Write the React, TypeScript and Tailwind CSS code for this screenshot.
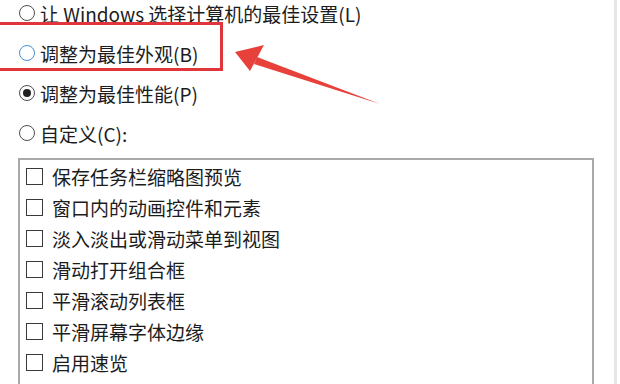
import React from 'react'

const radios = [
  { label: '让 Windows 选择计算机的最佳设置(L)', state: 'off' },
  { label: '调整为最佳外观(B)', state: 'hover' },
  { label: '调整为最佳性能(P)', state: 'on' },
  { label: '自定义(C):', state: 'off' },
]

const options = [
  '保存任务栏缩略图预览',
  '窗口内的动画控件和元素',
  '淡入淡出或滑动菜单到视图',
  '滑动打开组合框',
  '平滑滚动列表框',
  '平滑屏幕字体边缘',
  '启用速览',
  '在鼠标指针下显示阴影',
]

function Radio({ state }: { state: string }) {
  const ring = state === 'hover' ? 'border-[#4a90d0]' : 'border-[#4d4d4d]'
  return (
    <span className={`flex h-4 w-4 shrink-0 items-center justify-center rounded-full border-[1.5px] bg-white ${ring}`}>
      {state === 'on' && <span className="h-2 w-2 rounded-full bg-[#222]" />}
    </span>
  )
}

export default function App() {
  return (
    <div
      className="relative flex h-[384px] w-[620px] overflow-hidden bg-white text-[19px] text-[#1c1c1c]"
      style={{ fontFamily: '"Noto Sans CJK SC", "Noto Sans", sans-serif' }}
    >
      <div className="flex w-[614px] flex-col pl-[19px] pr-[20px]">
        <div className="-mt-[7px] flex flex-col">
          {radios.map((r) => (
            <div key={r.label} className="flex h-[40px] items-center gap-[5px] leading-none">
              <Radio state={r.state} />
              <span>{r.label}</span>
            </div>
          ))}
        </div>
        <div className="-ml-px mt-[5px] flex-1 border-2 border-b-0 border-[#a9a9a9] pl-[6px] pt-[1px]">
          {options.map((o) => (
            <div key={o} className="flex h-[31px] items-center gap-[9px] leading-none">
              <span className="h-[17px] w-[17px] shrink-0 border-[1.5px] border-[#3a3a3a] bg-white" />
              <span>{o}</span>
            </div>
          ))}
        </div>
      </div>
      <div className="w-[3px] bg-[#e6e6e6]" />
      <div className="flex-1 bg-white" />

      {/* annotation: red box */}
      <div className="absolute -left-[10px] top-[22px] h-[49px] w-[233px] border-[3px] border-[#e0353b]" />

      {/* annotation: arrow */}
      <svg className="pointer-events-none absolute left-0 top-0" width="620" height="384" viewBox="0 0 620 384">
        <polygon points="380,104 257,57 254,64" fill="#e8413c" />
        <polygon points="235,52 264,45 250,71" fill="#e8413c" />
      </svg>
    </div>
  )
}
